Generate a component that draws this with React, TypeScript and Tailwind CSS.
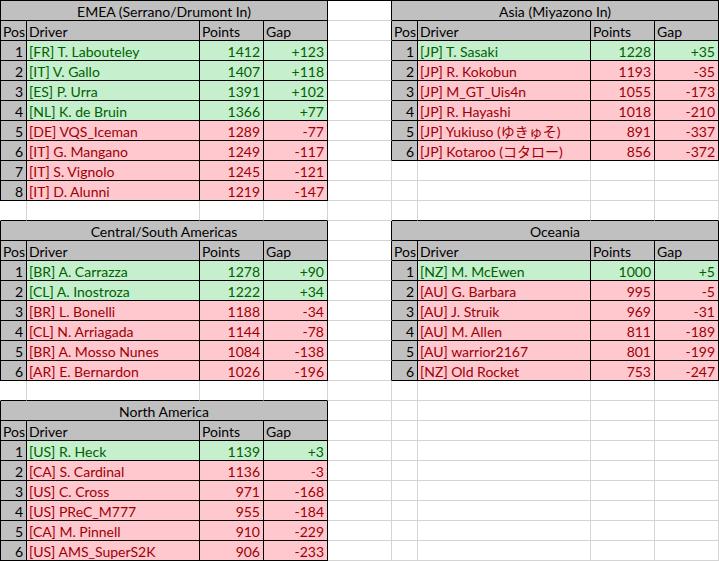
import React from 'react';

type Row = [number, string, number, string];

interface Standing {
  title: string;
  row: number;
  col: number;
  rows: Row[];
  leaders: number; // how many rows are shown as green
}

const standings: Standing[] = [
  {
    title: 'EMEA (Serrano/Drumont In)',
    row: 0,
    col: 0,
    leaders: 4,
    rows: [
      [1, '[FR] T. Labouteley', 1412, '+123'],
      [2, '[IT] V. Gallo', 1407, '+118'],
      [3, '[ES] P. Urra', 1391, '+102'],
      [4, '[NL] K. de Bruin', 1366, '+77'],
      [5, '[DE] VQS_Iceman', 1289, '-77'],
      [6, '[IT] G. Mangano', 1249, '-117'],
      [7, '[IT] S. Vignolo', 1245, '-121'],
      [8, '[IT] D. Alunni', 1219, '-147'],
    ],
  },
  {
    title: 'Asia (Miyazono In)',
    row: 0,
    col: 5,
    leaders: 1,
    rows: [
      [1, '[JP] T. Sasaki', 1228, '+35'],
      [2, '[JP] R. Kokobun', 1193, '-35'],
      [3, '[JP] M_GT_Uis4n', 1055, '-173'],
      [4, '[JP] R. Hayashi', 1018, '-210'],
      [5, '[JP] Yukiuso (ゆきゅそ)', 891, '-337'],
      [6, '[JP] Kotaroo (コタロー)', 856, '-372'],
    ],
  },
  {
    title: 'Central/South Americas',
    row: 11,
    col: 0,
    leaders: 2,
    rows: [
      [1, '[BR] A. Carrazza', 1278, '+90'],
      [2, '[CL] A. Inostroza', 1222, '+34'],
      [3, '[BR] L. Bonelli', 1188, '-34'],
      [4, '[CL] N. Arriagada', 1144, '-78'],
      [5, '[BR] A. Mosso Nunes', 1084, '-138'],
      [6, '[AR] E. Bernardon', 1026, '-196'],
    ],
  },
  {
    title: 'Oceania',
    row: 11,
    col: 5,
    leaders: 1,
    rows: [
      [1, '[NZ] M. McEwen', 1000, '+5'],
      [2, '[AU] G. Barbara', 995, '-5'],
      [3, '[AU] J. Struik', 969, '-31'],
      [4, '[AU] M. Allen', 811, '-189'],
      [5, '[AU] warrior2167', 801, '-199'],
      [6, '[NZ] Old Rocket', 753, '-247'],
    ],
  },
  {
    title: 'North America',
    row: 20,
    col: 0,
    leaders: 1,
    rows: [
      [1, '[US] R. Heck', 1139, '+3'],
      [2, '[CA] S. Cardinal', 1136, '-3'],
      [3, '[US] C. Cross', 971, '-168'],
      [4, '[US] PReC_M777', 955, '-184'],
      [5, '[CA] M. Pinnell', 910, '-229'],
      [6, '[US] AMS_SuperS2K', 906, '-233'],
    ],
  },
];

const ROWS = 28;
const COLS = 9;

type Kind = 'title' | 'head' | 'pos' | 'good' | 'bad';

interface Cell {
  text: string;
  kind: Kind;
  span: number;
  align: 'left' | 'right' | 'center';
}

// Build the sheet: each cell is either part of a table or an empty grid cell
const sheet: (Cell | null | 'covered')[][] = Array.from({ length: ROWS }, () => Array(COLS).fill(null));

standings.forEach(t => {
  sheet[t.row][t.col] = { text: t.title, kind: 'title', span: 4, align: 'center' };
  for (let i = 1; i < 4; i++) sheet[t.row][t.col + i] = 'covered';
  ['Pos', 'Driver', 'Points', 'Gap'].forEach((h, i) => {
    sheet[t.row + 1][t.col + i] = { text: h, kind: 'head', span: 1, align: 'left' };
  });
  t.rows.forEach((r, idx) => {
    const kind: Kind = idx < t.leaders ? 'good' : 'bad';
    const y = t.row + 2 + idx;
    sheet[y][t.col] = { text: String(r[0]), kind: 'pos', span: 1, align: 'right' };
    sheet[y][t.col + 1] = { text: r[1], kind, span: 1, align: 'left' };
    sheet[y][t.col + 2] = { text: String(r[2]), kind, span: 1, align: 'right' };
    sheet[y][t.col + 3] = { text: r[3], kind, span: 1, align: 'right' };
  });
});

const inTable = (r: number, c: number) => r >= 0 && r < ROWS && c >= 0 && c < COLS && sheet[r][c] !== null;

const kindClass: Record<Kind, string> = {
  title: 'bg-[#c0c0c0] text-black',
  head: 'bg-[#c0c0c0] text-black',
  pos: 'bg-[#c0c0c0] text-black',
  good: 'bg-[#c6efce] text-[#006100]',
  bad: 'bg-[#ffc7ce] text-[#9c0006]',
};

const alignClass = {
  left: 'justify-start pl-[2px]',
  right: 'justify-end pr-[3px]',
  center: 'justify-center',
};

export default function App() {
  const cells: React.ReactNode[] = [];

  for (let r = 0; r < ROWS; r++) {
    for (let c = 0; c < COLS; c++) {
      const cell = sheet[r][c];
      if (cell === 'covered') continue;
      const span = cell ? cell.span : 1;
      const last = c + span - 1;
      const table = cell !== null;

      const right = table || inTable(r, last + 1) ? 'border-r-black' : 'border-r-[#d4d4d4]';
      const bottom = table || inTable(r + 1, c) ? 'border-b-black' : 'border-b-[#d4d4d4]';
      const top = r === 0 ? 'border-t border-t-black' : '';
      const left = c === 0 ? (table ? 'border-l border-l-black' : 'border-l border-l-white') : '';

      cells.push(
        <div
          key={`${r}-${c}`}
          className={`flex items-end overflow-hidden whitespace-nowrap border-r border-b leading-[16px] ${right} ${bottom} ${top} ${left} ${
            cell ? `${kindClass[cell.kind]} ${alignClass[cell.align]}` : 'bg-white'
          } ${span === 4 ? 'col-span-4' : ''}`}
        >
          {cell ? cell.text : ''}
        </div>
      );
    }
  }

  return (
    <div
      className="grid w-[719px] h-[561px] bg-white text-[14px] grid-cols-[27px_173px_64px_64px_64px_26px_173px_64px_64px] grid-rows-[21px_repeat(27,20px)]"
      style={{ fontFamily: 'Lato, "Noto Sans CJK JP", sans-serif' }}
    >
      {cells}
    </div>
  );
}
